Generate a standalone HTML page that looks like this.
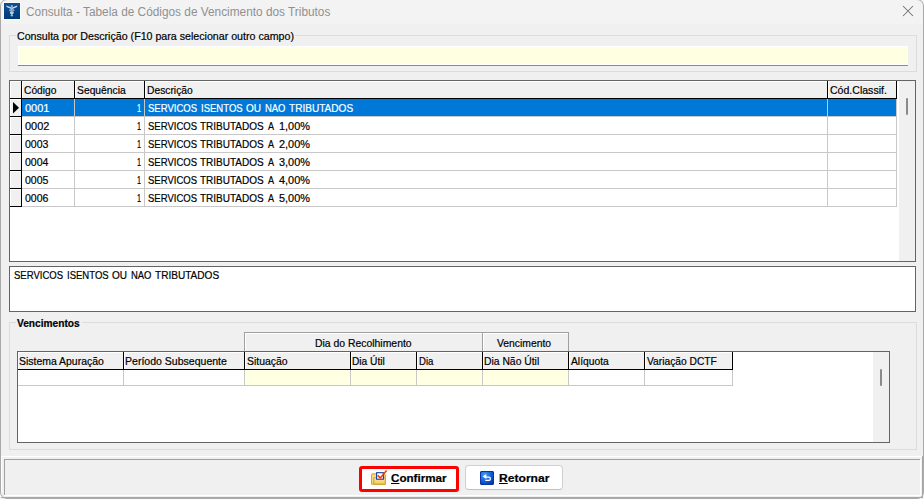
<!DOCTYPE html>
<html><head><meta charset="utf-8"><style>
html,body{margin:0;padding:0;width:924px;height:499px;overflow:hidden;background:#f0f0f0;}
body>div{position:absolute;}
.t{font-family:"Liberation Sans",sans-serif;white-space:pre;line-height:20px;transform-origin:0 0;}
u{text-decoration:underline;text-underline-offset:1px;}
</style></head><body>
<div style="left:0px;top:0px;width:924px;height:24px;background:#f3f3f3"></div>
<div style="left:0;top:-1px;width:924px;height:500px;border:1px solid #a9a9a9;box-sizing:border-box;border-radius:7px;z-index:5;pointer-events:none"></div>
<svg style="position:absolute;left:3px;top:2px" width="18" height="18" viewBox="0 0 18 18">
<rect x="0" y="0" width="18" height="18" fill="#fafafa"/>
<defs><linearGradient id="ig" x1="0" y1="0" x2="0" y2="1"><stop offset="0" stop-color="#0d4f95"/><stop offset="1" stop-color="#003a78"/></linearGradient></defs>
<rect x="1" y="1" width="16" height="16" fill="url(#ig)"/>
<g fill="#dfe8f2">
<path d="M3.3 3.6 L8.8 5.6 L8.8 7.2 L3.6 5 Z" opacity="0.9"/>
<path d="M14.3 3.6 L8.8 5.6 L8.8 7.2 L14 5 Z" opacity="0.9"/>
<ellipse cx="8.8" cy="4.1" rx="1.1" ry="1.1" opacity="0.7"/>
<ellipse cx="8.8" cy="8.3" rx="2.9" ry="1.4" opacity="0.6"/>
<ellipse cx="8.8" cy="10.8" rx="2" ry="1.4" opacity="0.85"/>
<ellipse cx="8.8" cy="13.2" rx="1.1" ry="1.3" opacity="0.75"/>
</g>
</svg>
<div class="t" style="left:26.30px;top:2px;font-size:12px;font-weight:400;color:#909090;transform:scaleX(0.9861);">Consulta - Tabela de Códigos de Vencimento dos Tributos</div>
<svg style="position:absolute;left:902px;top:5px" width="12" height="12" viewBox="0 0 12 12"><path d="M1 1 L11 11 M11 1 L1 11" stroke="#707070" stroke-width="1.05" fill="none"/></svg>
<div style="left:9px;top:35px;width:908px;height:37px;border:1px solid #dcdcdc;box-sizing:border-box"></div>
<div style="left:16px;top:30px;width:279px;height:13px;background:#f0f0f0"></div>
<div class="t" style="left:16.70px;top:26px;font-size:11px;font-weight:400;color:#000;transform:scaleX(0.9678);-webkit-text-stroke:0.2px currentColor;">Consulta por Descrição (F10 para selecionar outro campo)</div>
<div style="left:18px;top:46px;width:890px;height:20px;background:#ffffe1;border:1px solid #fff;border-bottom:0;box-sizing:border-box"></div>
<div style="left:18px;top:64px;width:890px;height:1px;background:#fff"></div>
<div style="left:18px;top:65px;width:890px;height:1px;background:#8a8a8a"></div>
<div style="left:9px;top:80px;width:907px;height:182px;background:#fff;border:1px solid #646464;box-sizing:border-box"></div>
<div style="left:899px;top:81px;width:16px;height:180px;background:#f0f0f0"></div>
<div style="left:906px;top:98px;width:2px;height:17px;background:#8a8a8a;border-radius:1px"></div>
<div style="left:10px;top:81px;width:887px;height:17px;background:#f0f0f0"></div>
<div style="left:10px;top:81px;width:887px;height:1px;background:#fff"></div>
<div style="left:10px;top:81px;width:1px;height:17px;background:#fff"></div>
<div style="left:22px;top:81px;width:1px;height:17px;background:#fff"></div>
<div style="left:75px;top:81px;width:1px;height:17px;background:#fff"></div>
<div style="left:145px;top:81px;width:1px;height:17px;background:#fff"></div>
<div style="left:828px;top:81px;width:1px;height:17px;background:#fff"></div>
<div style="left:10px;top:98px;width:887px;height:1px;background:#000"></div>
<div style="left:21px;top:81px;width:1px;height:18px;background:#000"></div>
<div style="left:74px;top:81px;width:1px;height:18px;background:#000"></div>
<div style="left:144px;top:81px;width:1px;height:18px;background:#000"></div>
<div style="left:827px;top:81px;width:1px;height:18px;background:#000"></div>
<div style="left:896px;top:81px;width:1px;height:18px;background:#000"></div>
<div class="t" style="left:23.50px;top:80px;font-size:11px;font-weight:400;color:#000;transform:scaleX(0.9286);-webkit-text-stroke:0.2px currentColor;">Código</div>
<div class="t" style="left:76.50px;top:80px;font-size:11px;font-weight:400;color:#000;transform:scaleX(0.9385);-webkit-text-stroke:0.2px currentColor;">Sequência</div>
<div class="t" style="left:146.70px;top:80px;font-size:11px;font-weight:400;color:#000;transform:scaleX(0.9347);-webkit-text-stroke:0.2px currentColor;">Descrição</div>
<div class="t" style="left:829.60px;top:80px;font-size:11px;font-weight:400;color:#000;transform:scaleX(0.9593);-webkit-text-stroke:0.2px currentColor;">Cód.Classif.</div>
<div style="left:10px;top:99px;width:11px;height:17px;background:#f0f0f0"></div>
<div style="left:10px;top:99px;width:1px;height:17px;background:#fff"></div>
<div style="left:10px;top:99px;width:11px;height:1px;background:#fff"></div>
<div style="left:10px;top:116px;width:12px;height:1px;background:#000"></div>
<div style="left:21px;top:99px;width:1px;height:18px;background:#000"></div>
<div style="left:22px;top:99px;width:874px;height:17px;background:#0078d7"></div>
<div style="left:22px;top:116px;width:875px;height:1px;background:#c8c8c8"></div>
<div style="left:74px;top:99px;width:1px;height:18px;background:#c8c8c8"></div>
<div style="left:144px;top:99px;width:1px;height:18px;background:#c8c8c8"></div>
<div style="left:827px;top:99px;width:1px;height:18px;background:#c8c8c8"></div>
<div style="left:896px;top:99px;width:1px;height:18px;background:#c8c8c8"></div>
<div class="t" style="left:24.90px;top:98px;font-size:11px;font-weight:400;color:#fff;transform:scaleX(0.9958);-webkit-text-stroke:0.2px currentColor;">0001</div>
<div class="t" style="left:136.60px;top:98px;font-size:11px;font-weight:400;color:#fff;transform:scaleX(0.6667);-webkit-text-stroke:0.2px currentColor;">1</div>
<div class="t" style="left:147.70px;top:98px;font-size:11px;font-weight:400;color:#fff;transform:scaleX(0.8667);-webkit-text-stroke:0.2px currentColor;">SERVICOS</div>
<div class="t" style="left:201.00px;top:98px;font-size:11px;font-weight:400;color:#fff;transform:scaleX(0.8667);-webkit-text-stroke:0.2px currentColor;">ISENTOS</div>
<div class="t" style="left:246.40px;top:98px;font-size:11px;font-weight:400;color:#fff;transform:scaleX(0.9125);-webkit-text-stroke:0.2px currentColor;">OU</div>
<div class="t" style="left:264.80px;top:98px;font-size:11px;font-weight:400;color:#fff;transform:scaleX(0.8583);-webkit-text-stroke:0.2px currentColor;">NAO</div>
<div class="t" style="left:289.10px;top:98px;font-size:11px;font-weight:400;color:#fff;transform:scaleX(0.9157);-webkit-text-stroke:0.2px currentColor;">TRIBUTADOS</div>
<div style="left:10px;top:117px;width:11px;height:17px;background:#f0f0f0"></div>
<div style="left:10px;top:117px;width:1px;height:17px;background:#fff"></div>
<div style="left:10px;top:117px;width:11px;height:1px;background:#fff"></div>
<div style="left:10px;top:134px;width:12px;height:1px;background:#000"></div>
<div style="left:21px;top:117px;width:1px;height:18px;background:#000"></div>
<div style="left:22px;top:134px;width:875px;height:1px;background:#c8c8c8"></div>
<div style="left:74px;top:117px;width:1px;height:18px;background:#c8c8c8"></div>
<div style="left:144px;top:117px;width:1px;height:18px;background:#c8c8c8"></div>
<div style="left:827px;top:117px;width:1px;height:18px;background:#c8c8c8"></div>
<div style="left:896px;top:117px;width:1px;height:18px;background:#c8c8c8"></div>
<div class="t" style="left:24.90px;top:116px;font-size:11px;font-weight:400;color:#000;transform:scaleX(0.9958);-webkit-text-stroke:0.2px currentColor;">0002</div>
<div class="t" style="left:136.60px;top:116px;font-size:11px;font-weight:400;color:#000;transform:scaleX(0.6667);-webkit-text-stroke:0.2px currentColor;">1</div>
<div class="t" style="left:147.70px;top:116px;font-size:11px;font-weight:400;color:#000;transform:scaleX(0.8667);-webkit-text-stroke:0.2px currentColor;">SERVICOS</div>
<div class="t" style="left:200.30px;top:116px;font-size:11px;font-weight:400;color:#000;transform:scaleX(0.9086);-webkit-text-stroke:0.2px currentColor;">TRIBUTADOS</div>
<div class="t" style="left:267.80px;top:116px;font-size:11px;font-weight:400;color:#000;transform:scaleX(0.8250);-webkit-text-stroke:0.2px currentColor;">A</div>
<div class="t" style="left:278.60px;top:116px;font-size:11px;font-weight:400;color:#000;transform:scaleX(0.9906);-webkit-text-stroke:0.2px currentColor;">1,00%</div>
<div style="left:10px;top:135px;width:11px;height:17px;background:#f0f0f0"></div>
<div style="left:10px;top:135px;width:1px;height:17px;background:#fff"></div>
<div style="left:10px;top:135px;width:11px;height:1px;background:#fff"></div>
<div style="left:10px;top:152px;width:12px;height:1px;background:#000"></div>
<div style="left:21px;top:135px;width:1px;height:18px;background:#000"></div>
<div style="left:22px;top:152px;width:875px;height:1px;background:#c8c8c8"></div>
<div style="left:74px;top:135px;width:1px;height:18px;background:#c8c8c8"></div>
<div style="left:144px;top:135px;width:1px;height:18px;background:#c8c8c8"></div>
<div style="left:827px;top:135px;width:1px;height:18px;background:#c8c8c8"></div>
<div style="left:896px;top:135px;width:1px;height:18px;background:#c8c8c8"></div>
<div class="t" style="left:24.90px;top:134px;font-size:11px;font-weight:400;color:#000;transform:scaleX(0.9560);-webkit-text-stroke:0.2px currentColor;">0003</div>
<div class="t" style="left:136.60px;top:134px;font-size:11px;font-weight:400;color:#000;transform:scaleX(0.6667);-webkit-text-stroke:0.2px currentColor;">1</div>
<div class="t" style="left:147.70px;top:134px;font-size:11px;font-weight:400;color:#000;transform:scaleX(0.8667);-webkit-text-stroke:0.2px currentColor;">SERVICOS</div>
<div class="t" style="left:200.30px;top:134px;font-size:11px;font-weight:400;color:#000;transform:scaleX(0.9086);-webkit-text-stroke:0.2px currentColor;">TRIBUTADOS</div>
<div class="t" style="left:267.80px;top:134px;font-size:11px;font-weight:400;color:#000;transform:scaleX(0.8250);-webkit-text-stroke:0.2px currentColor;">A</div>
<div class="t" style="left:278.60px;top:134px;font-size:11px;font-weight:400;color:#000;transform:scaleX(0.9906);-webkit-text-stroke:0.2px currentColor;">2,00%</div>
<div style="left:10px;top:153px;width:11px;height:17px;background:#f0f0f0"></div>
<div style="left:10px;top:153px;width:1px;height:17px;background:#fff"></div>
<div style="left:10px;top:153px;width:11px;height:1px;background:#fff"></div>
<div style="left:10px;top:170px;width:12px;height:1px;background:#000"></div>
<div style="left:21px;top:153px;width:1px;height:18px;background:#000"></div>
<div style="left:22px;top:170px;width:875px;height:1px;background:#c8c8c8"></div>
<div style="left:74px;top:153px;width:1px;height:18px;background:#c8c8c8"></div>
<div style="left:144px;top:153px;width:1px;height:18px;background:#c8c8c8"></div>
<div style="left:827px;top:153px;width:1px;height:18px;background:#c8c8c8"></div>
<div style="left:896px;top:153px;width:1px;height:18px;background:#c8c8c8"></div>
<div class="t" style="left:24.90px;top:152px;font-size:11px;font-weight:400;color:#000;transform:scaleX(0.9560);-webkit-text-stroke:0.2px currentColor;">0004</div>
<div class="t" style="left:136.60px;top:152px;font-size:11px;font-weight:400;color:#000;transform:scaleX(0.6667);-webkit-text-stroke:0.2px currentColor;">1</div>
<div class="t" style="left:147.70px;top:152px;font-size:11px;font-weight:400;color:#000;transform:scaleX(0.8667);-webkit-text-stroke:0.2px currentColor;">SERVICOS</div>
<div class="t" style="left:200.30px;top:152px;font-size:11px;font-weight:400;color:#000;transform:scaleX(0.9086);-webkit-text-stroke:0.2px currentColor;">TRIBUTADOS</div>
<div class="t" style="left:267.80px;top:152px;font-size:11px;font-weight:400;color:#000;transform:scaleX(0.8250);-webkit-text-stroke:0.2px currentColor;">A</div>
<div class="t" style="left:278.60px;top:152px;font-size:11px;font-weight:400;color:#000;transform:scaleX(0.9906);-webkit-text-stroke:0.2px currentColor;">3,00%</div>
<div style="left:10px;top:171px;width:11px;height:17px;background:#f0f0f0"></div>
<div style="left:10px;top:171px;width:1px;height:17px;background:#fff"></div>
<div style="left:10px;top:171px;width:11px;height:1px;background:#fff"></div>
<div style="left:10px;top:188px;width:12px;height:1px;background:#000"></div>
<div style="left:21px;top:171px;width:1px;height:18px;background:#000"></div>
<div style="left:22px;top:188px;width:875px;height:1px;background:#c8c8c8"></div>
<div style="left:74px;top:171px;width:1px;height:18px;background:#c8c8c8"></div>
<div style="left:144px;top:171px;width:1px;height:18px;background:#c8c8c8"></div>
<div style="left:827px;top:171px;width:1px;height:18px;background:#c8c8c8"></div>
<div style="left:896px;top:171px;width:1px;height:18px;background:#c8c8c8"></div>
<div class="t" style="left:24.90px;top:170px;font-size:11px;font-weight:400;color:#000;transform:scaleX(0.9560);-webkit-text-stroke:0.2px currentColor;">0005</div>
<div class="t" style="left:136.60px;top:170px;font-size:11px;font-weight:400;color:#000;transform:scaleX(0.6667);-webkit-text-stroke:0.2px currentColor;">1</div>
<div class="t" style="left:147.70px;top:170px;font-size:11px;font-weight:400;color:#000;transform:scaleX(0.8667);-webkit-text-stroke:0.2px currentColor;">SERVICOS</div>
<div class="t" style="left:200.30px;top:170px;font-size:11px;font-weight:400;color:#000;transform:scaleX(0.9086);-webkit-text-stroke:0.2px currentColor;">TRIBUTADOS</div>
<div class="t" style="left:267.80px;top:170px;font-size:11px;font-weight:400;color:#000;transform:scaleX(0.8250);-webkit-text-stroke:0.2px currentColor;">A</div>
<div class="t" style="left:278.60px;top:170px;font-size:11px;font-weight:400;color:#000;transform:scaleX(0.9906);-webkit-text-stroke:0.2px currentColor;">4,00%</div>
<div style="left:10px;top:189px;width:11px;height:17px;background:#f0f0f0"></div>
<div style="left:10px;top:189px;width:1px;height:17px;background:#fff"></div>
<div style="left:10px;top:189px;width:11px;height:1px;background:#fff"></div>
<div style="left:10px;top:206px;width:12px;height:1px;background:#000"></div>
<div style="left:21px;top:189px;width:1px;height:18px;background:#000"></div>
<div style="left:22px;top:206px;width:875px;height:1px;background:#c8c8c8"></div>
<div style="left:74px;top:189px;width:1px;height:18px;background:#c8c8c8"></div>
<div style="left:144px;top:189px;width:1px;height:18px;background:#c8c8c8"></div>
<div style="left:827px;top:189px;width:1px;height:18px;background:#c8c8c8"></div>
<div style="left:896px;top:189px;width:1px;height:18px;background:#c8c8c8"></div>
<div class="t" style="left:24.90px;top:188px;font-size:11px;font-weight:400;color:#000;transform:scaleX(0.9560);-webkit-text-stroke:0.2px currentColor;">0006</div>
<div class="t" style="left:136.60px;top:188px;font-size:11px;font-weight:400;color:#000;transform:scaleX(0.6667);-webkit-text-stroke:0.2px currentColor;">1</div>
<div class="t" style="left:147.70px;top:188px;font-size:11px;font-weight:400;color:#000;transform:scaleX(0.8667);-webkit-text-stroke:0.2px currentColor;">SERVICOS</div>
<div class="t" style="left:200.30px;top:188px;font-size:11px;font-weight:400;color:#000;transform:scaleX(0.9086);-webkit-text-stroke:0.2px currentColor;">TRIBUTADOS</div>
<div class="t" style="left:267.80px;top:188px;font-size:11px;font-weight:400;color:#000;transform:scaleX(0.8250);-webkit-text-stroke:0.2px currentColor;">A</div>
<div class="t" style="left:278.60px;top:188px;font-size:11px;font-weight:400;color:#000;transform:scaleX(0.9906);-webkit-text-stroke:0.2px currentColor;">5,00%</div>
<svg style="position:absolute;left:12px;top:101px" width="9" height="14"><path d="M1 1 L1 12.5 L7 6.75 Z" fill="#000"/></svg>
<div style="left:9px;top:266px;width:907px;height:46px;background:#fff;border:1px solid #646464;box-sizing:border-box"></div>
<div class="t" style="left:13.60px;top:265px;font-size:11px;font-weight:400;color:#000;transform:scaleX(0.8667);-webkit-text-stroke:0.2px currentColor;">SERVICOS</div>
<div class="t" style="left:66.90px;top:265px;font-size:11px;font-weight:400;color:#000;transform:scaleX(0.8667);-webkit-text-stroke:0.2px currentColor;">ISENTOS</div>
<div class="t" style="left:112.30px;top:265px;font-size:11px;font-weight:400;color:#000;transform:scaleX(0.9125);-webkit-text-stroke:0.2px currentColor;">OU</div>
<div class="t" style="left:130.70px;top:265px;font-size:11px;font-weight:400;color:#000;transform:scaleX(0.8583);-webkit-text-stroke:0.2px currentColor;">NAO</div>
<div class="t" style="left:155.00px;top:265px;font-size:11px;font-weight:400;color:#000;transform:scaleX(0.9157);-webkit-text-stroke:0.2px currentColor;">TRIBUTADOS</div>
<div style="left:9px;top:322px;width:908px;height:128px;border:1px solid #dcdcdc;box-sizing:border-box"></div>
<div style="left:16px;top:316px;width:66px;height:13px;background:#f0f0f0"></div>
<div class="t" style="left:17.40px;top:313px;font-size:11px;font-weight:700;color:#000;transform:scaleX(0.9235);-webkit-text-stroke:0.2px currentColor;">Vencimentos</div>
<div style="left:244px;top:332px;width:325px;height:20px;background:#f0f0f0;border:1px solid #a0a0a0;border-bottom:0;box-sizing:border-box"></div>
<div style="left:245px;top:333px;width:323px;height:1px;background:#fff"></div>
<div style="left:245px;top:333px;width:1px;height:18px;background:#fff"></div>
<div style="left:482px;top:332px;width:1px;height:20px;background:#a0a0a0"></div>
<div style="left:483px;top:333px;width:1px;height:18px;background:#fff"></div>
<div class="t" style="left:314.50px;top:333px;font-size:11px;font-weight:400;color:#000;transform:scaleX(0.9461);-webkit-text-stroke:0.2px currentColor;">Dia do Recolhimento</div>
<div class="t" style="left:497.40px;top:333px;font-size:11px;font-weight:400;color:#000;transform:scaleX(0.9414);-webkit-text-stroke:0.2px currentColor;">Vencimento</div>
<div style="left:17px;top:351px;width:873px;height:92px;background:#fff;border:1px solid #646464;box-sizing:border-box"></div>
<div style="left:873px;top:352px;width:16px;height:90px;background:#f0f0f0"></div>
<div style="left:880px;top:369px;width:2px;height:17px;background:#8a8a8a;border-radius:1px"></div>
<div style="left:18px;top:352px;width:715px;height:17px;background:#f0f0f0"></div>
<div style="left:18px;top:352px;width:715px;height:1px;background:#fff"></div>
<div style="left:18px;top:352px;width:1px;height:17px;background:#fff"></div>
<div style="left:124px;top:352px;width:1px;height:17px;background:#fff"></div>
<div style="left:245px;top:352px;width:1px;height:17px;background:#fff"></div>
<div style="left:351px;top:352px;width:1px;height:17px;background:#fff"></div>
<div style="left:417px;top:352px;width:1px;height:17px;background:#fff"></div>
<div style="left:483px;top:352px;width:1px;height:17px;background:#fff"></div>
<div style="left:569px;top:352px;width:1px;height:17px;background:#fff"></div>
<div style="left:645px;top:352px;width:1px;height:17px;background:#fff"></div>
<div style="left:18px;top:369px;width:715px;height:1px;background:#000"></div>
<div style="left:123px;top:352px;width:1px;height:18px;background:#000"></div>
<div style="left:244px;top:352px;width:1px;height:18px;background:#000"></div>
<div style="left:350px;top:352px;width:1px;height:18px;background:#000"></div>
<div style="left:416px;top:352px;width:1px;height:18px;background:#000"></div>
<div style="left:482px;top:352px;width:1px;height:18px;background:#000"></div>
<div style="left:568px;top:352px;width:1px;height:18px;background:#000"></div>
<div style="left:644px;top:352px;width:1px;height:18px;background:#000"></div>
<div style="left:732px;top:352px;width:1px;height:18px;background:#000"></div>
<div style="left:245px;top:370px;width:105px;height:15px;background:#ffffe1"></div>
<div style="left:351px;top:370px;width:65px;height:15px;background:#ffffe1"></div>
<div style="left:417px;top:370px;width:65px;height:15px;background:#ffffe1"></div>
<div style="left:483px;top:370px;width:85px;height:15px;background:#ffffe1"></div>
<div style="left:18px;top:385px;width:715px;height:1px;background:#c8c8c8"></div>
<div style="left:123px;top:370px;width:1px;height:16px;background:#c8c8c8"></div>
<div style="left:244px;top:370px;width:1px;height:16px;background:#c8c8c8"></div>
<div style="left:350px;top:370px;width:1px;height:16px;background:#c8c8c8"></div>
<div style="left:416px;top:370px;width:1px;height:16px;background:#c8c8c8"></div>
<div style="left:482px;top:370px;width:1px;height:16px;background:#c8c8c8"></div>
<div style="left:568px;top:370px;width:1px;height:16px;background:#c8c8c8"></div>
<div style="left:644px;top:370px;width:1px;height:16px;background:#c8c8c8"></div>
<div style="left:732px;top:370px;width:1px;height:16px;background:#c8c8c8"></div>
<div class="t" style="left:19.40px;top:351px;font-size:11px;font-weight:400;color:#000;transform:scaleX(0.9500);-webkit-text-stroke:0.2px currentColor;">Sistema Apuração</div>
<div class="t" style="left:125.40px;top:351px;font-size:11px;font-weight:400;color:#000;transform:scaleX(0.9575);-webkit-text-stroke:0.2px currentColor;">Período Subsequente</div>
<div class="t" style="left:246.50px;top:351px;font-size:11px;font-weight:400;color:#000;transform:scaleX(0.9488);-webkit-text-stroke:0.2px currentColor;">Situação</div>
<div class="t" style="left:352.20px;top:351px;font-size:11px;font-weight:400;color:#000;transform:scaleX(0.9250);-webkit-text-stroke:0.2px currentColor;">Dia Útil</div>
<div class="t" style="left:418.70px;top:351px;font-size:11px;font-weight:400;color:#000;transform:scaleX(0.8706);-webkit-text-stroke:0.2px currentColor;">Dia</div>
<div class="t" style="left:484.20px;top:351px;font-size:11px;font-weight:400;color:#000;transform:scaleX(0.9407);-webkit-text-stroke:0.2px currentColor;">Dia Não Útil</div>
<div class="t" style="left:570.60px;top:351px;font-size:11px;font-weight:400;color:#000;transform:scaleX(0.9341);-webkit-text-stroke:0.2px currentColor;">Alíquota</div>
<div class="t" style="left:646.60px;top:351px;font-size:11px;font-weight:400;color:#000;transform:scaleX(0.9307);-webkit-text-stroke:0.2px currentColor;">Variação DCTF</div>
<div style="left:1px;top:456px;width:922px;height:1px;background:#fff"></div>
<div style="left:1px;top:456px;width:1px;height:42px;background:#fff"></div>
<div style="left:922px;top:456px;width:1px;height:42px;background:#a8a8a8"></div>
<div style="left:1px;top:497px;width:922px;height:1px;background:#a8a8a8"></div>
<div style="left:4px;top:459px;width:916px;height:1px;background:#a0a0a0"></div>
<div style="left:4px;top:459px;width:1px;height:37px;background:#a0a0a0"></div>
<div style="left:920px;top:459px;width:1px;height:37px;background:#fff"></div>
<div style="left:4px;top:495px;width:917px;height:1px;background:#fff"></div>
<div style="left:359px;top:466px;width:100px;height:26px;background:#fff;border:3px solid #f00;border-radius:3px;box-sizing:border-box"></div>
<div style="left:465px;top:465px;width:98px;height:25px;background:#fff;border:1px solid #d0d0d0;border-bottom-color:#c0c0c0;border-radius:4px;box-sizing:border-box"></div>
<svg style="position:absolute;left:370px;top:469px" width="20" height="18" viewBox="0 0 20 18">
<defs><linearGradient id="fg" x1="0" y1="0" x2="0" y2="1"><stop offset="0" stop-color="#fbeaa8"/><stop offset="1" stop-color="#f0c85a"/></linearGradient></defs>
<path d="M1.6 15.2 L1.6 6 Q1.6 4.8 2.8 4.8 L5.8 4.8 L6.8 5.8 L15.3 5.8 L15.3 15.2 Z" fill="#f6dc86" stroke="#cf9f2a" stroke-width="1"/>
<path d="M3.8 15.2 L3.8 8.8 L15.3 8.8 L15.3 15.2 Z" fill="url(#fg)" stroke="#cf9f2a" stroke-width="1"/>
<rect x="6.6" y="3.7" width="6.8" height="6.5" fill="#fff" stroke="#173c9c" stroke-width="1.1"/>
<path d="M7.6 6.4 L10.3 8.9 L16.6 1.5" stroke="#f23a14" stroke-width="1.6" fill="none" stroke-linejoin="round"/>
</svg>
<div class="t" style="left:391.10px;top:468px;font-size:11px;font-weight:700;color:#000;transform:scaleX(1.0566);-webkit-text-stroke:0.2px currentColor;"><u>C</u>onfirmar</div>
<svg style="position:absolute;left:480px;top:471px" width="14" height="14" viewBox="0 0 14 14">
<defs><radialGradient id="bg2" cx="0.3" cy="0.25" r="0.9"><stop offset="0" stop-color="#4a9af5"/><stop offset="0.6" stop-color="#1160d8"/><stop offset="1" stop-color="#0035a8"/></radialGradient></defs>
<path d="M1 0 L13 0 L14 1 L14 13 L13 14 L1 14 L0 13 L0 1 Z" fill="#0a35a0"/>
<path d="M1.5 1 L12.5 1 L13 1.5 L13 12.5 L12.5 13 L1.5 13 L1 12.5 L1 1.5 Z" fill="url(#bg2)"/>
<path d="M5.8 6.1 L8.8 6.1 Q10.4 6.1 10.4 7.7 Q10.4 9.3 8.8 9.3 L5.3 9.3" stroke="#fff" stroke-width="1.25" fill="none"/>
<path d="M2.7 5.5 L6.3 2.9 L6.3 7.9 Z" fill="#fff"/>
</svg>
<div class="t" style="left:499.30px;top:468px;font-size:11px;font-weight:700;color:#000;transform:scaleX(1.1000);-webkit-text-stroke:0.2px currentColor;"><u>R</u>etornar</div>
</body></html>
